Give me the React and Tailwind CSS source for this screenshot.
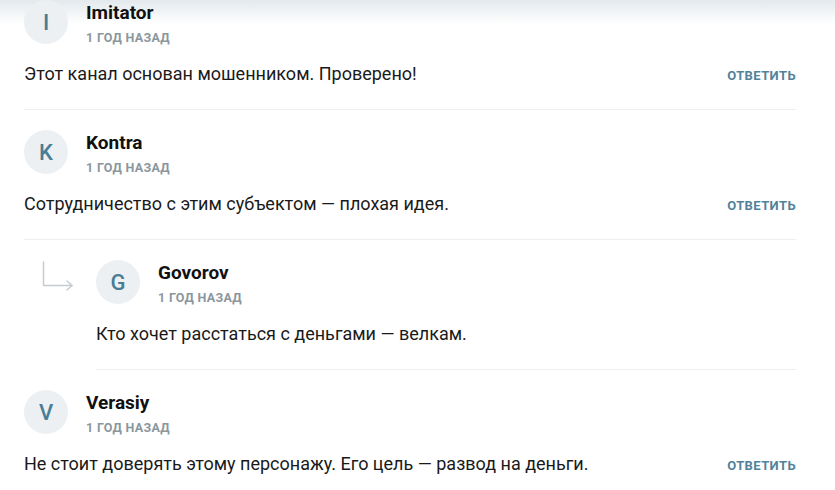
import React from "react";

const comments = [
  { letter: "I", name: "Imitator", text: "Этот канал основан мошенником. Проверено!", reply: true },
  { letter: "K", name: "Kontra", text: "Сотрудничество с этим субъектом — плохая идея.", reply: true },
  { letter: "G", name: "Govorov", text: "Кто хочет расстаться с деньгами — велкам.", nested: true },
  { letter: "V", name: "Verasiy", text: "Не стоит доверять этому персонажу. Его цель — развод на деньги.", reply: true },
];

function Arrow() {
  return (
    <svg width="40" height="34" viewBox="0 0 40 34" fill="none" className="shrink-0">
      <path d="M4.5 2 V25.5 H33" stroke="#c5ccd1" strokeWidth="1.5" strokeLinecap="round" strokeLinejoin="round" />
      <path d="M28 21 L33 25.5 L28 30" stroke="#c5ccd1" strokeWidth="1.5" strokeLinecap="round" strokeLinejoin="round" />
    </svg>
  );
}

function Comment({ c, first, last }) {
  return (
    <div className={`${first ? "pt-0" : "pt-[20px]"} pb-[21px] ${last ? "" : "border-b border-[#eceeef]"}`}>
      <div className="flex items-start">
        <div className="w-[44px] h-[44px] rounded-full bg-[#ecf0f3] flex items-center justify-center text-[22px] font-medium text-[#4a7d95] shrink-0">
          {c.letter}
        </div>
        <div className="ml-[18px] pt-[3px]">
          <div className="text-[19px] leading-[20px] font-bold text-[#111]">{c.name}</div>
          <div className="mt-[8px] text-[12.5px] leading-[14px] font-bold text-[#8b969d] uppercase tracking-[0.3px]">1 год назад</div>
        </div>
      </div>
      <div className="mt-[17px] h-[26px] flex items-start justify-between">
        <div className="text-[18px] leading-[24px] text-[#1a1a1a]">{c.text}</div>
        {c.reply && (
          <div className="mt-[2px] text-[13px] leading-[24px] font-bold uppercase text-[#52829a] tracking-[0.4px]">ответить</div>
        )}
      </div>
    </div>
  );
}

export default function App() {
  return (
    <div className="relative w-[835px] h-[490px] bg-white overflow-hidden" style={{ fontFamily: "Roboto, 'Noto Sans', sans-serif" }}>
      <div className="absolute top-0 left-0 right-0 h-[24px] bg-gradient-to-b from-[#e3e9ec] to-white pointer-events-none" />
      <div className="relative pl-[24px] pr-[39px]">
        <Comment c={comments[0]} first />
        <Comment c={comments[1]} />
        <div className="flex">
          <div className="pt-[20px] pl-[15px] w-[72px] shrink-0">
            <Arrow />
          </div>
          <div className="flex-1">
            <Comment c={comments[2]} />
          </div>
        </div>
        <Comment c={comments[3]} last />
      </div>
    </div>
  );
}
